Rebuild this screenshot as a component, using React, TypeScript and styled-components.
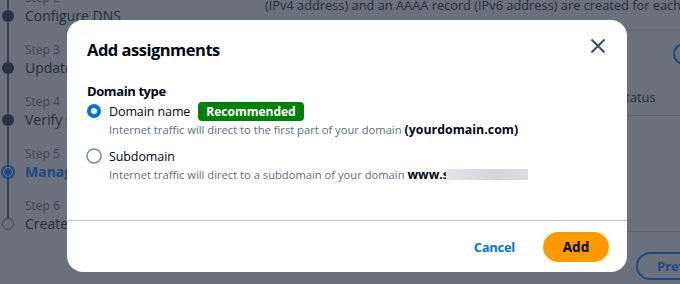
import React from 'react'
import styled, { createGlobalStyle } from 'styled-components'

const GlobalStyle = createGlobalStyle`
  html, body {
    margin: 0;
    padding: 0;
  }
  body {
    width: 680px;
    height: 284px;
    overflow: hidden;
    font-family: 'Open Sans', 'Noto Sans', 'Liberation Sans', sans-serif;
  }
`

const Page = styled.div`
  position: relative;
  display: flex;
  width: 680px;
  height: 284px;
  overflow: hidden;
  background: #6a717d;
`

const Sidebar = styled.div`
  display: flex;
  flex-direction: column;
  width: 240px;
  flex-shrink: 0;
  margin-top: -10px;
`

const StepItem = styled.div`
  display: grid;
  grid-template-columns: 16px 1fr;
  grid-template-rows: 16px 20px 16px;
  column-gap: 9px;
`

const Rail = styled.div`
  grid-row: 1 / 4;
  grid-column: 1;
  display: flex;
  flex-direction: column;
  align-items: center;
`

const RailLine = styled.div<{ hidden?: boolean; grow?: boolean; h?: number }>`
  width: 2px;
  background: ${(p) => (p.hidden ? 'transparent' : '#3b4352')};
  height: ${(p) => (p.h ? `${p.h}px` : 'auto')};
  flex: ${(p) => (p.grow ? 1 : 'none')};
`

const Dot = styled.div<{ kind: 'done' | 'current' | 'todo' }>`
  box-sizing: border-box;
  flex-shrink: 0;
  border-radius: 50%;
  width: ${(p) => (p.kind === 'current' ? '14px' : '12px')};
  height: ${(p) => (p.kind === 'current' ? '14px' : '12px')};
  margin: ${(p) => (p.kind === 'current' ? '-1px 0' : '0')};
  background: ${(p) =>
    p.kind === 'done' ? '#283142' : p.kind === 'current' ? 'radial-gradient(circle, #1d4a80 0 3.5px, transparent 4px)' : 'transparent'};
  border: ${(p) => (p.kind === 'current' ? '2px solid #1d4a80' : p.kind === 'todo' ? '1.5px solid #3f4756' : 'none')};
`

const StepLabel = styled.div`
  grid-column: 2;
  font-size: 12px;
  line-height: 16px;
  color: #3d4553;
`

const StepTitle = styled.div<{ active?: boolean }>`
  grid-column: 2;
  font-size: 14px;
  line-height: 20px;
  white-space: nowrap;
  color: ${(p) => (p.active ? '#1d4a80' : '#262d3a')};
  font-weight: ${(p) => (p.active ? 700 : 400)};
`

const Main = styled.div`
  display: flex;
  flex-direction: column;
  padding-left: 25px;
  flex: 1;
  min-width: 0;
`

const Intro = styled.div`
  font-size: 12.8px;
  line-height: 20px;
  margin-top: -5px;
  white-space: nowrap;
  color: #262d3a;
`

const Panel = styled.div`
  margin-top: 15px;
  border-top: 1px solid #5a616d;
  border-bottom: 1px solid #5a616d;
  width: 600px;
  display: flex;
  flex-direction: column;
`

const PanelHeader = styled.div`
  display: flex;
  justify-content: flex-end;
  padding: 12px 0 0 0;
  height: 24px;
`

const RoundIconButton = styled.div`
  box-sizing: border-box;
  width: 22px;
  height: 22px;
  margin-right: 170px;
  border: 2px solid #1d4a80;
  border-radius: 50%;
`

const TableHead = styled.div`
  display: flex;
  margin-top: 20px;
  padding-bottom: 8px;
  border-bottom: 1px solid #5a616d;
  font-size: 13px;
  line-height: 20px;
  color: #262d3a;
`

const HeadCell = styled.div<{ w: number }>`
  width: ${(p) => p.w}px;
`

const TableBody = styled.div`
  height: 115px;
`

const PageFooter = styled.div`
  display: flex;
  padding-top: 20px;
  padding-left: 371px;
`

const OutlineButton = styled.div`
  box-sizing: border-box;
  height: 28px;
  padding: 0 18px 0 19px;
  border: 2px solid #1d4a80;
  border-radius: 20px;
  font-size: 13px;
  font-weight: 700;
  line-height: 24px;
  color: #1d4a80;
  white-space: nowrap;
`

const Modal = styled.div`
  position: absolute;
  left: 67px;
  top: 20px;
  width: 560px;
  height: 252px;
  box-sizing: border-box;
  background: #ffffff;
  border-radius: 16px;
  display: flex;
  flex-direction: column;
  color: #000716;
`

const ModalHeader = styled.div`
  display: flex;
  justify-content: space-between;
  align-items: flex-start;
  padding: 19px 21px 0 20px;
`

const Title = styled.h2`
  margin: 0;
  font-size: 16.5px;
  line-height: 22px;
  font-weight: 700;
  letter-spacing: -0.5px;
`

const CloseButton = styled.button`
  border: none;
  background: none;
  padding: 0;
  margin-top: -1px;
  width: 16px;
  height: 16px;
  display: flex;
  cursor: pointer;
`

const ModalBody = styled.div`
  flex: 1;
  display: flex;
  flex-direction: column;
  padding: 21px 20px 0 20px;
`

const FieldLabel = styled.div`
  font-size: 13px;
  line-height: 18px;
  font-weight: 700;
  letter-spacing: -0.4px;
`

const Option = styled.div<{ first?: boolean }>`
  display: grid;
  grid-template-columns: 16px 1fr;
  column-gap: 7px;
  margin-top: ${(p) => (p.first ? '0' : '7px')};
  margin-left: -1px;
`

const RadioBox = styled.div`
  display: flex;
  align-items: center;
  height: 22px;
`

const OptionLine = styled.div`
  display: flex;
  align-items: center;
  gap: 8px;
  height: 22px;
  font-size: 12.5px;
  letter-spacing: -0.1px;
`

const Badge = styled.span`
  display: inline-flex;
  align-items: center;
  height: 19px;
  padding: 0 8px;
  border-radius: 4px;
  background: #037f0c;
  color: #ffffff;
  font-size: 12px;
  font-weight: 700;
  letter-spacing: 0;
`

const Description = styled.div`
  grid-column: 2;
  font-size: 11.2px;
  line-height: 16px;
  color: #5f6b7a;
  white-space: nowrap;
`

const Strong = styled.b`
  font-size: 12.4px;
  font-weight: 700;
  color: #000716;
`

const Redacted = styled.span`
  display: inline-block;
  vertical-align: -1px;
  width: 82px;
  height: 11px;
  margin-left: -3px;
  background: linear-gradient(90deg, #e4e5e8, #d3d5d9 60%, #dcdee1);
`

const ModalFooter = styled.div`
  height: 52px;
  box-sizing: border-box;
  border-top: 1px solid #c6c6cd;
  display: flex;
  align-items: center;
  justify-content: flex-end;
  gap: 8px;
  padding: 0 18px 0 20px;
`

const LinkButton = styled.button`
  border: none;
  background: none;
  padding: 4px 20px;
  font-family: inherit;
  font-size: 13px;
  font-weight: 700;
  letter-spacing: -0.3px;
  color: #0972d3;
  cursor: pointer;
`

const PrimaryButton = styled.button`
  border: none;
  height: 30px;
  width: 66px;
  border-radius: 20px;
  background: #ff9900;
  font-family: inherit;
  font-size: 13.5px;
  font-weight: 700;
  color: #000716;
  cursor: pointer;
`

const Radio: React.FC<{ checked?: boolean }> = ({ checked }) => (
  <svg width="16" height="16" viewBox="0 0 16 16">
    {checked ? (
      <circle cx="8" cy="8" r="5" fill="#ffffff" stroke="#0972d3" strokeWidth="4" />
    ) : (
      <circle cx="8" cy="8" r="7" fill="#ffffff" stroke="#7d8998" strokeWidth="1.5" />
    )}
  </svg>
)

const steps = [
  { n: 2, title: 'Configure DNS', kind: 'done' as const },
  { n: 3, title: 'Update DNS records', kind: 'done' as const },
  { n: 4, title: 'Verify setup', kind: 'done' as const },
  { n: 5, title: 'Manage assignments', kind: 'current' as const },
  { n: 6, title: 'Create', kind: 'todo' as const },
]

const App: React.FC = () => {
  return (
    <Page>
      <GlobalStyle />
      <Sidebar>
        {steps.map((s, i) => (
          <StepItem key={s.n}>
            <Rail>
              <RailLine h={20} />
              <Dot kind={s.kind} />
              <RailLine grow hidden={i === steps.length - 1} />
            </Rail>
            <StepLabel>Step {s.n}</StepLabel>
            <StepTitle active={s.kind === 'current'}>{s.title}</StepTitle>
          </StepItem>
        ))}
      </Sidebar>
      <Main>
        <Intro>(IPv4 address) and an AAAA record (IPv6 address) are created for each assignment.</Intro>
        <Panel>
          <PanelHeader>
            <RoundIconButton />
          </PanelHeader>
          <TableHead>
            <HeadCell w={353}>Domain</HeadCell>
            <HeadCell w={120}>Status</HeadCell>
          </TableHead>
          <TableBody />
        </Panel>
        <PageFooter>
          <OutlineButton>Previous</OutlineButton>
        </PageFooter>
      </Main>

      <Modal role="dialog">
        <ModalHeader>
          <Title>Add assignments</Title>
          <CloseButton aria-label="Close">
            <svg width="16" height="16" viewBox="0 0 16 16">
              <path d="M1.5 1.5l13 13M14.5 1.5l-13 13" stroke="#414d5c" strokeWidth="2" fill="none" />
            </svg>
          </CloseButton>
        </ModalHeader>
        <ModalBody>
          <FieldLabel>Domain type</FieldLabel>
          <Option first>
            <RadioBox>
              <Radio checked />
            </RadioBox>
            <OptionLine>
              Domain name <Badge>Recommended</Badge>
            </OptionLine>
            <Description>
              Internet traffic will direct to the first part of your domain <Strong>(yourdomain.com)</Strong>
            </Description>
          </Option>
          <Option>
            <RadioBox>
              <Radio />
            </RadioBox>
            <OptionLine>Subdomain</OptionLine>
            <Description>
              Internet traffic will direct to a subdomain of your domain <Strong>www.s</Strong>
              <Redacted />
            </Description>
          </Option>
        </ModalBody>
        <ModalFooter>
          <LinkButton>Cancel</LinkButton>
          <PrimaryButton>Add</PrimaryButton>
        </ModalFooter>
      </Modal>
    </Page>
  )
}

export default App
